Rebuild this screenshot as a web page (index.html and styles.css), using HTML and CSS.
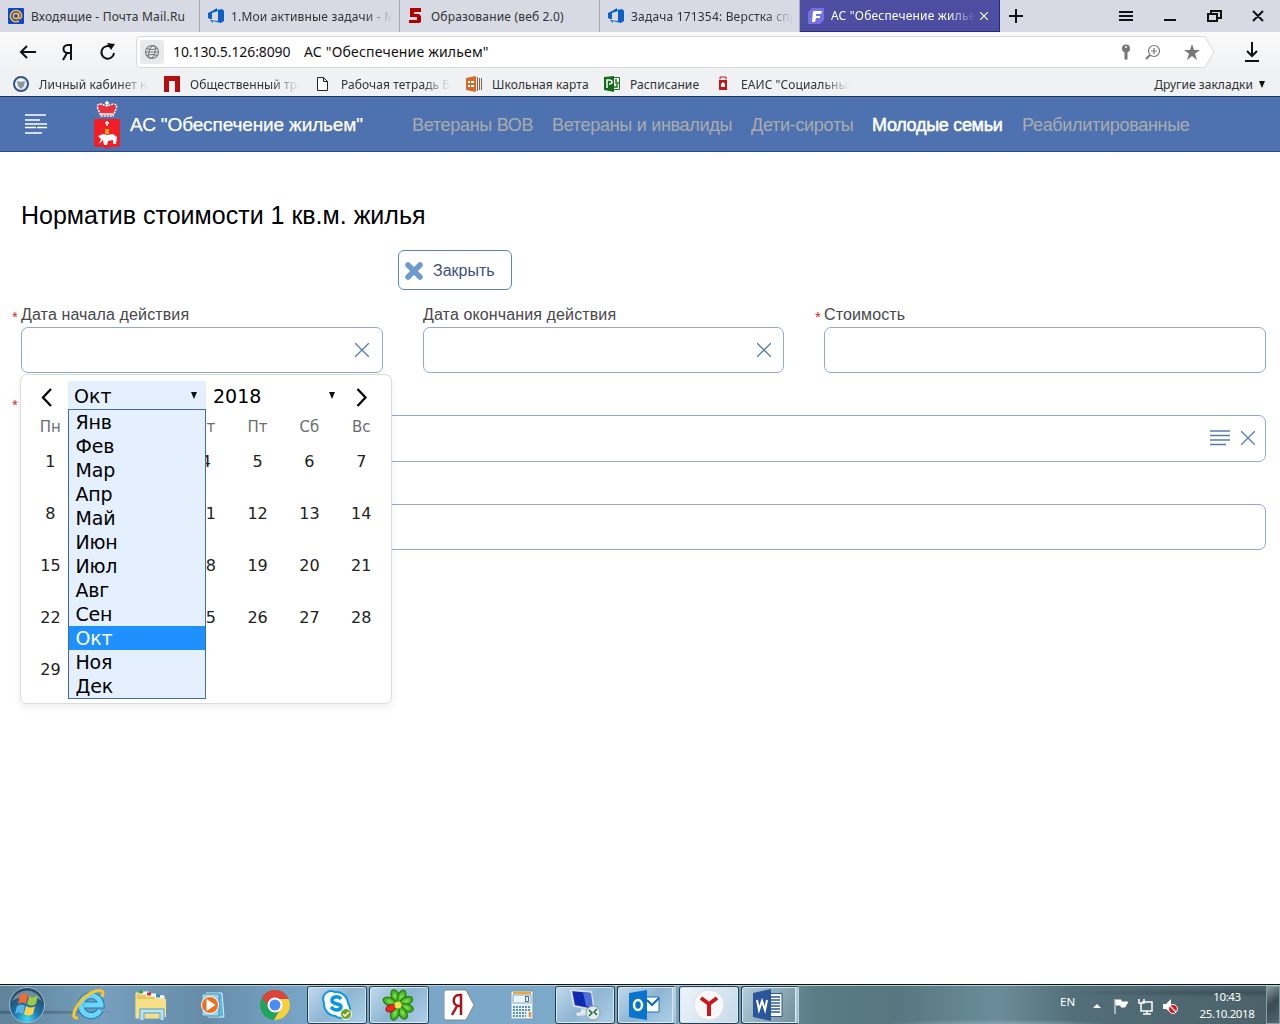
FILE: index.html
```html
<!DOCTYPE html>
<html lang="ru">
<head>
<meta charset="utf-8">
<title>АС "Обеспечение жильем"</title>
<link rel="stylesheet" href="styles.css">
</head>
<body>
<div class="tabs">
  <div class="tab"><svg width="16" height="16"><rect width="16" height="16" rx="1" fill="#0b48d0"/><g fill="none" stroke="#ffb72d" stroke-width="1.6"><circle cx="8" cy="8" r="2.6"/><path d="M10.6 5.3v4c0 2 3 1.5 3-1.3A5.6 5.6 0 1 0 11 12.8"/></g></svg><span class="t1">Входящие - Почта Mail.Ru</span></div>
  <div class="tab"><svg width="16" height="16"><path d="M0 5l4-2 5-3v2l5-1 2 2v10l-3 2-8-2v2l-3-3 8 1V3L4 5v6H2l-2-1z" fill="#0b61c4"/></svg><span class="t2 fade">1.Мои активные задачи - М</span></div>
  <div class="tab"><svg width="16" height="16"><path d="M2 0h11v4H6v2h5l2 2v6l-2 1H1v-3h8V9H2z" fill="#b20000"/></svg><span class="t3">Образование (веб 2.0)</span></div>
  <div class="tab"><svg width="16" height="16"><path d="M0 5l4-2 5-3v2l5-1 2 2v10l-3 2-8-2v2l-3-3 8 1V3L4 5v6H2l-2-1z" fill="#0b61c4"/></svg><span class="t4 fade">Задача 171354: Верстка спр</span></div>
  <div class="tab active"><svg width="16" height="16"><path d="M4 0h12v12l-4 4H0V4z" fill="#7471e6"/><path d="M5 3h9l-1 3H8v2h4v2H8l-1 4H4z" fill="#fff"/></svg><span class="t5 fade">АС "Обеспечение жильем</span><svg class="tab-close" width="8" height="8"><path d="M0 0l8 8M8 0L0 8" stroke="#fff" stroke-width="1.2"/></svg></div>
  <svg class="window-tools" width="280" height="32" fill="none" stroke="#111" stroke-width="2"><path d="M9 16h14M16 9v14M119 12h14M119 16h14M119 20h14M164 20h12M208 14h9v7h-9zM211 14v-3h10v7h-4M253 11l10 10M263 11l-10 10"/></svg>
</div>
<div class="address">
  <svg class="nav-tools" width="136" height="40" fill="none" stroke="#111" stroke-width="2"><path d="M36 20H21m6-6l-6 6 6 6M71 28V13h-3c-6 0-6 8 0 8h3m-4 0l-4 7"/><path d="M111 15a6.300 6.300 0 1 0 3 6"/><path d="M107 11l8 1-4 6z" fill="#111" stroke="none"/></svg>
  <div class="omnibox">
    <svg class="omnibox-shape" width="1079" height="32"><path d="M4 .5H1069L1078 16L1069 31.500H4Q.5 31.500 .5 28V4Q.5.5 4 .5z" fill="#fff" stroke="#d6d8da"/></svg>
    <span class="globe"><svg width="16" height="16" fill="none" stroke="#777" stroke-width="1.1"><circle cx="8" cy="8" r="6.500"/><ellipse cx="8" cy="8" rx="3" ry="6.500" transform="rotate(15 8 8)"/><path d="M1.500 8h13M3 4.500q5 2 10 0M3 11.500q5-2 10 0"/></svg></span>
    <span class="url">10.130.5.126:8090</span><span class="page-name">АС "Обеспечение жильем"</span>
    <svg class="omnibox-tools" width="90" height="24"><circle cx="10" cy="8.500" r="4" fill="#777"/><path d="M8.500 12h3v7l-1.500 1-1.500-1z" fill="#777"/><circle cx="10" cy="7" r="1" fill="#fff"/><g fill="none" stroke="#777" stroke-width="1.200"><circle cx="38" cy="11" r="5.500"/><path d="M35 11h6M38 8v6"/><path d="M34 15l-4 4" stroke-width="2"/></g><path d="M76 4l2 6h6l-5 3.700 2 6.300-5-4-5 4 2-6.300L68 10h6z" fill="#777"/></svg>
  </div>
  <svg class="download" width="14" height="20" fill="none" stroke="#111" stroke-width="2"><path d="M7 0v14M2 9l5 5 5-5M0 19h14"/></svg>
</div>
<div class="bookmarks">
  <div class="bookmark b1"><svg width="16" height="16"><circle cx="8" cy="8" r="7" fill="#eef1f4" stroke="#2d5683" stroke-width="2"/><path d="M4 5l4 1 4-1-1 5-3 3-3-3z" fill="#8796a3"/></svg><span class="fade">Личный кабинет на</span></div>
  <div class="bookmark b2"><svg width="16" height="16"><path d="M0 0h16v16h-5V5H5v11H0z" fill="#b40d12"/></svg><span class="fade">Общественный тра</span></div>
  <div class="bookmark b3"><svg width="16" height="16"><path d="M2.500 1.500h6l4 4v9h-10zM8.500 1.500v4h4" fill="#fff" stroke="#222"/></svg><span class="fade">Рабочая тетрадь Ба</span></div>
  <div class="bookmark b4"><svg width="16" height="16"><path d="M0 2l10-2v16L0 14z" fill="#d66a28"/><path d="M2 6h2m1 0h3M2 10h2m1 0h3" stroke="#fff" stroke-width="2"/><path d="M11.500 1v14M13.500 2v12M15.500 2v12" stroke="#886050"/></svg><span>Школьная карта</span></div>
  <div class="bookmark b5"><svg width="16" height="16"><path d="M9 1.500h6.500v12H9z" fill="#fff" stroke="#187418"/><path d="M0 1l10-1v16L0 14z" fill="#146b19"/><path d="M3 12V4h2c4 0 4 4 0 4" stroke="#fff" fill="none" stroke-width="1.500"/><path d="M12 3v4h3M10 11h3V8" stroke="#187418" fill="none" stroke-width="1.500"/></svg><span>Расписание</span></div>
  <div class="bookmark b6"><svg width="16" height="16"><path d="M4 4h8v10H4z" fill="#c31616"/><path d="M5 3.500V1h6v2.500M4 4.500h8" fill="none" stroke="#b21a1a"/><path d="M8 6l2 2v3H6V8z" fill="#fff"/></svg><span class="fade">ЕАИС "Социальный</span></div>
  <div class="other"><span>Другие закладки</span><i></i></div>
</div>
<header class="site-header">
  <svg class="menu" width="22" height="20" stroke="#fff" stroke-width="1.500"><path d="M0 1h21M0 6h15M0 10h22M0 13.500h11M12 13.500h10M0 19h17"/></svg>
  <svg class="crest" width="26" height="50"><path d="M0 18h26v26l-2 2h-8l-3 2-3-2H2l-2-2z" fill="#f31e25"/><path d="M4 8q-2-5 3-5l6 2 6-2q5 0 3 5l-3 7H7z" fill="#e8323c" stroke="#fff" stroke-width="1.500" stroke-dasharray="2 1"/><path d="M13 0v5M11 2h4M7 13h12M13 20v5M11 22h4" stroke="#fff" stroke-width="1.500"/><path d="M11 28h4v5h-4z" fill="#e2a51c"/><path d="M4 35l5-2 4 1 6-1 4 3-1 7h-3v-4l-5 1-1 4h-3l-1-5-4 4H5l2-5z" fill="#fff"/></svg>
  <strong>АС "Обеспечение жильем"</strong>
  <nav><a class="n1">Ветераны ВОВ</a><a class="n2">Ветераны и инвалиды</a><a class="n3">Дети-сироты</a><a class="n4 current">Молодые семьи</a><a class="n5">Реабилитированные</a></nav>
</header>
<main>
  <h1>Норматив стоимости 1 кв.м. жилья</h1>
  <button class="close-button"><svg width="18" height="18"><path d="M3 3l12 12M15 3L3 15" stroke="#6d9bd0" stroke-width="5.500" stroke-linecap="round"/></svg><span>Закрыть</span></button>
  <div class="form">
    <div class="form-row">
      <div class="field start"><label class="required">Дата начала действия</label><div class="input"><svg width="14" height="14"><path d="M0 0l14 14M14 0L0 14"/></svg></div></div>
      <div class="field end"><label>Дата окончания действия</label><div class="input"><svg width="14" height="14"><path d="M0 0l14 14M14 0L0 14"/></svg></div></div>
      <div class="field cost"><label class="required">Стоимость</label><div class="input"></div></div>
    </div>
    <div class="field wide"><label class="required"></label><div class="input"><svg width="20" height="16"><path d="M0 1h20M0 5.500h20M0 10h20M0 14.500h16"/></svg><svg width="14" height="14"><path d="M0 0l14 14M14 0L0 14"/></svg></div></div>
    <div class="field wide last"><label></label><div class="input"></div></div>
    <section class="calendar">
      <div class="calendar-head"><svg width="43" height="28"><path d="M26 8l-8 8.500 8 8.500"/></svg>
        <div class="select month"><span>Окт</span><i></i>
          <ul><li>Янв</li><li>Фев</li><li>Мар</li><li>Апр</li><li>Май</li><li>Июн</li><li>Июл</li><li>Авг</li><li>Сен</li><li class="selected">Окт</li><li>Ноя</li><li>Дек</li></ul>
        </div>
        <div class="select year"><span>2018</span><i></i></div><svg width="43" height="28"><path d="M13.500 8l8 8.500-8 8.500"/></svg></div>
      <div class="weekdays"><span>Пн</span><span>Вт</span><span>Ср</span><span>Чт</span><span>Пт</span><span>Сб</span><span>Вс</span></div>
      <div class="days"><span>1</span><span>2</span><span>3</span><span>4</span><span>5</span><span>6</span><span>7</span><span>8</span><span>9</span><span>10</span><span>11</span><span>12</span><span>13</span><span>14</span><span>15</span><span>16</span><span>17</span><span>18</span><span>19</span><span>20</span><span>21</span><span>22</span><span>23</span><span>24</span><span>25</span><span>26</span><span>27</span><span>28</span><span>29</span><span>30</span><span>31</span></div>
    </section>
  </div>
</main>
<footer class="taskbar">
  <div class="task orb"><svg width="38" height="38"><defs><radialGradient id="orb" cy="90%" r="75%"><stop stop-color="#3fd9fa"/><stop offset=".45" stop-color="#1f78ac"/><stop offset="1" stop-color="#274a68"/></radialGradient></defs><circle cx="19" cy="19" r="17.500" fill="url(#orb)" stroke="#9dbfd4"/><path d="M4 15q15-9 30 0A16 16 0 0 0 4 15" fill="#fff" opacity=".35"/><path d="M12 9q5-3 8 0l-2 9q-4-3-8 0z" fill="#f06a35"/><path d="M21 10q4 3 9-1l-2 9q-5 3-9 0z" fill="#9cc946"/><path d="M9 20q5-3 8 0l-2 8q-4-3-8 0z" fill="#55b4eb"/><path d="M18 20q5 3 9 0l-2 8q-5 3-9 0z" fill="#fed34c"/></svg></div>
  <div class="task ie"><svg width="34" height="34"><path d="M28 22A10 10 0 1 1 29 17H12" fill="none" stroke="#187dbc" stroke-width="7"/><path d="M28 22A10 10 0 1 1 29 17H12" fill="none" stroke="#6cd5f8" stroke-width="5"/><path d="M6 30C-5 32 7 8 24 3c7-2 8 1 6 6" fill="none" stroke="#f6c72d" stroke-width="3"/></svg></div>
  <div class="task folder"><svg width="34" height="32"><path d="M2 4h8l2 3h18v22H2z" fill="#e8c75e" stroke="#fff0a6"/><path d="M5 4h10M12 6h10M21 8h9" stroke="#fff" stroke-width="3"/><path d="M5 3h4" stroke="#30a53b" stroke-width="3"/><path d="M13 5h4" stroke="#d42f35" stroke-width="3"/><path d="M22 7h4" stroke="#268dd5" stroke-width="3"/><path d="M2 10h30v18H2z" fill="#f7df85"/><path d="M8 31v-9h20v9" fill="none" stroke="#579fc8" stroke-width="5"/><path d="M8 31v-9h20v9" fill="none" stroke="#b9e4f5" stroke-width="3"/></svg></div>
  <div class="task media"><svg width="28" height="28"><path d="M7 2h16l2 24H9z" fill="#5eb8df" stroke="#cdf1ff"/><path d="M3 3h17v22H3z" fill="#a2d5e9" stroke="#548fb2"/><circle cx="11" cy="14" r="8.500" fill="#eb711f" stroke="#fff"/><path d="M7.500 8v12l9-6z" fill="#fff"/></svg></div>
  <div class="task chrome"><svg width="30" height="30"><defs><clipPath id="disk"><circle cx="15" cy="15" r="15"/></clipPath></defs><g clip-path="url(#disk)"><path d="M0 0h30v30H0z" fill="#20a35b"/><path d="M0 0h30v9H15L9 18 2 7z" fill="#dc4439"/><path d="M30 9v21H14l7-12-6-9z" fill="#f8cf3f"/></g><circle cx="15" cy="15" r="6.500" fill="#4b8bf5" stroke="#fff" stroke-width="2"/></svg></div>
  <div class="task open skype"><svg width="32" height="32"><g fill="#fff" stroke="#0798df" stroke-width="4"><circle cx="10" cy="10" r="7"/><circle cx="20" cy="20" r="8"/><circle cx="15" cy="15" r="11"/></g><g fill="#fff"><circle cx="10" cy="10" r="7"/><circle cx="20" cy="20" r="8"/><circle cx="15" cy="15" r="11"/></g><path d="M20 10c-3-4-10-2-9 2s10 2 9 6-7 4-10 0" fill="none" stroke="#0798df" stroke-width="3.500"/><circle cx="25" cy="25" r="5.500" fill="#6fa61d" stroke="#fff"/><path d="M22 25l2 2 4-4" fill="none" stroke="#fff" stroke-width="1.500"/></svg></div>
  <div class="task open icq"><svg width="34" height="34"><defs><radialGradient id="petal"><stop stop-color="#8ae94d"/><stop offset="1" stop-color="#279b17"/></radialGradient></defs><g fill="url(#petal)" stroke="#287b0d"><ellipse cx="17" cy="8" rx="4" ry="7" transform="rotate(-18 17 17)"/><ellipse cx="17" cy="8" rx="4" ry="7" transform="rotate(23 17 17)"/><ellipse cx="17" cy="8" rx="4" ry="7" transform="rotate(65 17 17)"/><ellipse cx="17" cy="8" rx="4" ry="7" transform="rotate(108 17 17)"/><ellipse cx="17" cy="8" rx="4" ry="7" transform="rotate(150 17 17)"/><ellipse cx="17" cy="8" rx="4" ry="7" transform="rotate(200 17 17)"/><ellipse cx="17" cy="8" rx="4" ry="7" transform="rotate(292 17 17)"/></g><ellipse cx="17" cy="9" rx="3.500" ry="5" transform="rotate(246 17 17)" fill="#ed2924" stroke="#9a1714"/><circle cx="17" cy="17" r="3.500" fill="#f5de51"/></svg></div>
  <div class="task yandex"><svg width="32" height="32"><path d="M2 1h20l8 15-8 15H2q-2 0-2-2V3q0-2 2-2z" fill="#fff" stroke="#7d8b94"/><path d="M17 26V6h-2c-7 0-7 11 0 11h2m-4 0l-5 9" fill="none" stroke="#a5161b" stroke-width="2.500"/></svg></div>
  <div class="task calc"><svg width="24" height="30"><rect x="1" y="1" width="22" height="28" fill="#e6f2f8" stroke="#789eb8"/><path d="M3 3h18" stroke="#eea33b" stroke-width="2.500"/><path d="M3 5h18v8H3z" fill="#e6f4fa" stroke="#8daebe"/><rect x="15.500" y="6.500" width="3" height="5" fill="none" stroke="#526a7b"/><path d="M3 17h18M3 20h18M3 23h13M3 26h13" stroke="#5e91af" stroke-width="2" stroke-dasharray="2 1"/><path d="M20 22v5" stroke="#e79225" stroke-width="2.500"/></svg></div>
  <div class="task open remote"><svg width="34" height="34"><path d="M3 2l20 2 3 18-20-4z" fill="#102bb0" stroke="#d6dde4" stroke-width="2"/><path d="M15 4l8 1 2 15-7-2z" fill="#4e70dc"/><path d="M13 21l6 1v5l-10 1-1-3 5-1z" fill="#e1e7eb"/><circle cx="25" cy="25" r="7" fill="#e1ebe8" stroke="#8d9ca3"/><path d="M21 22l3 3-3 3M29 21l-3 3 3 3" fill="none" stroke="#176a45" stroke-width="1.500"/></svg></div>
  <div class="task open outlook"><svg width="32" height="32"><path d="M16 8h14v15H16z" fill="#fff" stroke="#1172c5"/><path d="M18 11l5 5 7-7" fill="none" stroke="#1269b3" stroke-width="2"/><path d="M0 4l18-3v30L0 28z" fill="#0874cc"/><ellipse cx="9" cy="16" rx="4" ry="5" fill="none" stroke="#fff" stroke-width="2.500"/></svg></div>
  <div class="task open browser"><svg width="32" height="32"><circle cx="16" cy="16" r="15" fill="#f8f8f8" stroke="#d7e0e5"/><path d="M8 9l8 6v12m0-12l8-6" fill="none" stroke="#c91820" stroke-width="4"/></svg></div>
  <div class="task open word"><svg width="32" height="32"><path d="M16 4.500h13v23H16z" fill="#fff" stroke="#2e5898"/><path d="M17 8h10M17 11h10M17 14h10M17 17h10M17 20h10M17 23h10" stroke="#2e5898" stroke-width="1.300"/><path d="M0 4l18-4v32L0 28z" fill="#2b579a"/><path d="M4 11l2 10 3-9 3 9 2-10" fill="none" stroke="#fff" stroke-width="2"/></svg></div>
  <div class="tray"><span class="language">EN</span><svg width="90" height="20"><path d="M0 12l4-4 4 4z" fill="#fff"/><path d="M22 3v15M23 4h5v2h7l-2 3-1 2h-4v-2h-5z" fill="#fff" stroke="#fff"/><path d="M49 6h10v9H48v-5M46 3v4h5V3M48 7v3M50 18h8M54 15v3" fill="none" stroke="#fff" stroke-width="1.500"/><path d="M70 8h3l5-5v14l-5-4h-3z" fill="#fff"/><circle cx="80" cy="13" r="4.500" fill="#df1725" stroke="#fff"/><path d="M77 10l6 6" stroke="#fff" stroke-width="1.300"/></svg><div class="clock"><span>10:43</span><span>25.10.2018</span></div></div>
  <div class="show-desktop"></div>
</footer>
</body>
</html>
```
FILE: styles.css
```css
* { box-sizing: border-box; }
body { width: 1280px; height: 1024px; margin: 0; display: flex; flex-direction: column; overflow: hidden; background: #fff; font-family: "Liberation Sans", Arial, sans-serif; }
svg { display: block; flex: none; }
.tabs, .address, .bookmarks { font-family: "Noto Sans", sans-serif; color: #303236; }
.tabs { height: 32px; display: flex; flex: none; background: #d7dae2; font-size: 12px; letter-spacing: .18px; }
.tab { width: 200px; height: 32px; display: flex; align-items: center; gap: 7px; padding-left: 8px; border-right: 1px solid #a6a8ae; white-space: nowrap; }
.tab > span { width: 162px; overflow: hidden; line-height: 20px; padding-top: 1px; }
.fade { overflow: hidden; white-space: nowrap; -webkit-mask-image: linear-gradient(90deg, #000 calc(100% - 28px), transparent); }
.active { background: #4d4da2; color: #fff; border-color: #292981; border-bottom: 1px solid #292981; }
.tab.active > span { width: 145px; }
.tab-close { margin-left: -3px; }
.address { height: 40px; flex: none; display: flex; align-items: center; background: linear-gradient(#fafafb, #f0f1f2); }
.omnibox { position: relative; width: 1079px; height: 32px; display: flex; align-items: center; font-size: 14px; color: #111; }
.omnibox-shape { position: absolute; inset: 0; }
.globe { position: relative; width: 24px; height: 24px; margin-left: 4px; border-radius: 3px; background: #e8e9ea; display: grid; place-items: center; }
.url { position: relative; width: 131px; margin: -2px 0 0 9px; letter-spacing: -.1px; }
.page-name { position: relative; margin-top: -2px; letter-spacing: .18px; }
.omnibox-tools { position: relative; margin-left: auto; margin-right: 9px; }
.download { margin-left: 30px; }
.bookmarks { height: 24px; flex: none; display: flex; align-items: center; padding-left: 13px; background: #f0f1f2; font-size: 12px; letter-spacing: .08px; }
.bookmark { display: flex; align-items: center; gap: 10px; }
.bookmark span { white-space: nowrap; }
.b1 { width: 151px; } .b1 span { width: 109px; }
.b2 { width: 151px; } .b2 span { width: 109px; }
.b3 { width: 151px; } .b3 span { width: 109px; }
.b4 { width: 138px; }
.b5 { width: 111px; }
.b6 { width: 151px; } .b6 span { width: 109px; }
.other { margin-left: auto; margin-right: 15px; display: flex; align-items: center; gap: 6px; letter-spacing: .06px; }
.other i, .select i { border: 3.5px solid transparent; border-top: 7px solid #111; border-bottom: 0; }
.site-header { height: 56px; flex: none; display: flex; align-items: center; border-top: 1px solid #173366; border-bottom: 1px solid #294b88; background: #4e72b0; color: #fff; padding-left: 25px; white-space: nowrap; }
.crest { margin-left: 47px; margin-top: 4px; }
.site-header strong { width: 282px; margin-left: 10px; padding-top: 2px; font-size: 19px; letter-spacing: -.13px; font-weight: 400; -webkit-text-stroke: .25px #fff; }
.site-header nav { display: flex; padding-top: 2px; color: #aaabad; font-size: 18px; letter-spacing: -.3px; }
.n1 { width: 140px; } .n2 { width: 199px; } .n3 { width: 121px; } .n4 { width: 150px; }
.current { color: #fff; -webkit-text-stroke: .5px #fff; }
main { flex: 1; padding: 49px 14px 0 21px; }
h1 { margin: 0; height: 49px; line-height: 29px; font-size: 25px; font-weight: 400; letter-spacing: 0; }
.close-button { display: flex; align-items: center; gap: 10px; width: 114px; height: 40px; margin-left: 377px; padding: 2px 6px 0; border: 1px solid #5d87bb; border-radius: 6px; background: #fff; color: #3d5083; font: 16px "Liberation Sans", Arial, sans-serif; }
.form { position: relative; padding-top: 15px; }
.form-row { display: flex; gap: 40px; }
.field { display: flex; flex-direction: column; }
.field label { position: relative; height: 22px; line-height: 20px; font-size: 16px; letter-spacing: .12px; color: #47484b; }
.required::before { content: "*"; position: absolute; left: -9px; top: 2px; font-size: 15px; color: #d0262b; }
.start { width: 362px; } .end { width: 361px; } .cost { width: 442px; }
.input { height: 46px; display: flex; align-items: center; justify-content: flex-end; gap: 11px; padding-right: 12px; border: 1px solid #8faacc; border-radius: 7px; background: #fff; }
.start .input { padding-right: 13px; }
.input svg { stroke: #557cae; stroke-width: 1.3; fill: none; }
.wide { margin-top: 20px; }
.wide .input { padding-right: 10px; height: 47px; }
.wide .input svg { margin-bottom: 2px; }
.last { margin-top: 20px; }
.last .input { height: 46px; }
.calendar { position: absolute; left: -1px; top: 84px; width: 372px; height: 330px; padding-top: 6px; border: 1px solid #d9dbdc; border-radius: 7px; background: #fff; box-shadow: 0 4px 10px #0001; font-family: "DejaVu Sans", Verdana, sans-serif; }
.calendar-head { display: flex; height: 28px; padding-left: 4px; }
.calendar-head svg { fill: none; stroke: #000; stroke-width: 2.3; }
.select { position: relative; width: 138px; height: 28px; display: flex; align-items: center; justify-content: space-between; padding: 0 9px 0 6px; font-size: 19px; }
.select > span { line-height: 28px; padding-top: 2px; }
.month { background: #e4f0fe; }
.year { padding-left: 7px; }
.month ul { position: absolute; z-index: 2; top: 28px; left: 0; width: 138px; height: 290px; margin: 0; padding: 0; border: 1px solid #426aa4; background: #e4f0fe; list-style: none; letter-spacing: -.2px; }
.month li { height: 24px; padding-left: 6.5px; line-height: 25px; }
.month .selected { background: #1e90ff; color: #fff; }
.weekdays, .days { display: grid; grid-template-columns: repeat(7, 51.8px); padding-left: 3.5px; text-align: center; }
.weekdays { height: 28px; line-height: 36px; font-size: 15px; color: #6d6d6d; margin-bottom: -2px; }
.days { grid-auto-rows: 52px; font-size: 16px; line-height: 54px; letter-spacing: -.1px; color: #222; }
.taskbar { height: 40px; flex: none; display: flex; align-items: center; border-top: 1px solid #111; box-shadow: inset 0 1px #b6ced8; background: radial-gradient(ellipse at 1% 70%, #405c70, transparent 6%), radial-gradient(ellipse at 78% 100%, #88a4b2, transparent 8%), radial-gradient(ellipse at 97% 20%, #3c5258, transparent 10%), linear-gradient(90deg, #5f8499, #769fbd 8%, #668ca8 16%, #78a6c8 24%, #7ca8c9 43%, #789fb6 58%, #597b83 64%, #567780 70%, #6b8c9b 78%, #526e78 84%, #4b6168); }
.task { height: 38px; display: flex; align-items: center; justify-content: center; }
.orb { width: 54px; } .ie { width: 70px; } .folder { width: 54px; } .media { width: 69px; } .chrome { width: 60px; padding-right: 4px; }
.open { width: 60px; border: 1px solid #263d4d; border-radius: 3px; box-shadow: inset 0 0 0 1px #d5e9f4; background: linear-gradient(135deg, #c0d9eb, #8eb5d2 50%, #add0e8); }
.icq { margin-left: 2px; padding-right: 2px; } .yandex { width: 62px; } .calc { width: 62px; }
.remote { margin-left: 2px; } .outlook { margin-left: 2px; width: 59px; padding-right: 2px; border-right: 3px double #b5ceda; } .browser { margin-left: 3px; background: linear-gradient(120deg, #edf4f9, #c7d9e9); } .word { margin-left: 2px; width: 58px; border-right: 3px double #b5ceda; background: linear-gradient(120deg, #b3cddb, #718f9b); }
.tray { display: flex; align-items: center; margin-left: auto; color: #fff; font: 12px "Noto Sans", sans-serif; }
.tray svg { margin-left: 16px; margin-top: 2px; }
.language { width: 17px; font-size: 11.5px; margin-top: -6px; }
.clock { display: flex; flex-direction: column; align-items: center; width: 64px; margin-left: 12px; line-height: 17px; font-size: 11.5px; letter-spacing: -.4px; }
.show-desktop { width: 14px; height: 38px; margin-left: 7px; border: 1px solid #899fa7; background: linear-gradient(145deg, #899ba1, #3a4c53 45%, #53666d); }
```
